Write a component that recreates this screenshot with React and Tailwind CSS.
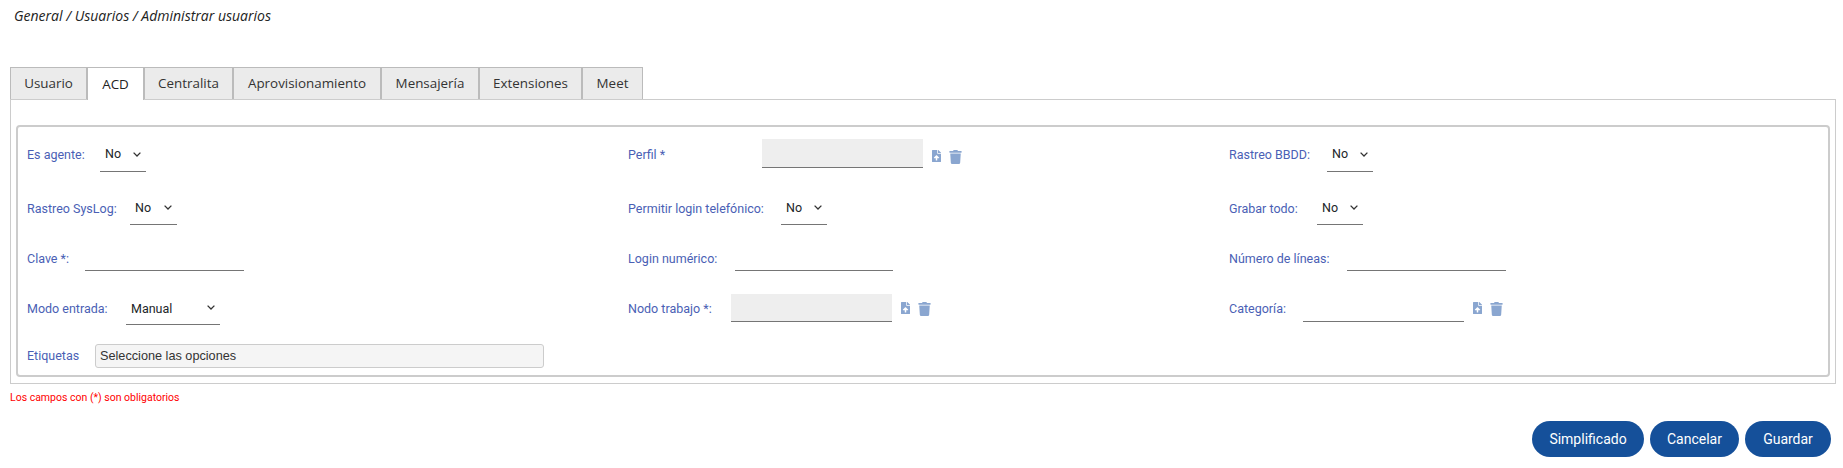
import React from "react";
import { FaFileUpload, FaTrash } from "react-icons/fa";

const tabs = ["Usuario", "ACD", "Centralita", "Aprovisionamiento", "Mensajería", "Extensiones", "Meet"];
const tabW = { Usuario: "w-[77px]", ACD: "w-[57px]", Centralita: "w-[89px]", Aprovisionamiento: "w-[148px]", "Mensajería": "w-[98px]", Extensiones: "w-[103px]", Meet: "w-[61px]" };

function Label({ children, w, nudge = "" }) {
  return <label className={`${w} shrink-0 text-[12.5px] leading-[18px] text-[#4a5fb5] whitespace-nowrap ${nudge}`}>{children}</label>;
}

function Sel({ w, v = "No", nudge = "" }) {
  return (
    <span className={`relative flex ${w} shrink-0`}>
      <select defaultValue={v} className={`w-full h-[33px] pl-[5px] ${nudge} appearance-none text-[12.5px] text-[#212529] bg-white border-0 border-b border-[#757575] outline-none`}>
        <option>{v}</option>
      </select>
      <svg viewBox="0 0 8 5" className="absolute right-[5px] top-[13px] w-[8px] h-[5px] pointer-events-none" fill="none" stroke="#333333" strokeWidth="1.3">
        <path d="M0.6 0.6 L4 4 L7.4 0.6" />
      </svg>
    </span>
  );
}

function Txt({ w, h, gray }) {
  return <input className={`${w} ${h} shrink-0 border-0 border-b border-[#757575] outline-none ${gray ? "bg-[#eeeeee]" : "bg-white"}`} />;
}

function Icons() {
  return (
    <span className="flex items-center ml-[9px] text-[#8aa6d0] pt-[2px]">
      <FaFileUpload className="w-[9px] h-[12px] mb-[2px]" />
      <FaTrash className="w-[13px] h-[14px] ml-[8px]" />
    </span>
  );
}

function Row({ h, mb, children }) {
  return <div className={`grid grid-cols-[601px_601px_1fr] grid-rows-[100%] items-center ${h} ${mb}`}>{children}</div>;
}

function Cell({ children }) {
  return <div className="flex items-center">{children}</div>;
}

export default function App() {
  return (
    <div className="w-[1843px] h-[468px] bg-white overflow-hidden font-['Roboto',sans-serif]">
      <div className="pl-[14px] pt-[7px] h-[67px] text-[14px] leading-[18px] italic text-[#222] font-['Open_Sans',sans-serif]">
        General / Usuarios / Administrar usuarios
      </div>
      <div className="ml-[10px] w-[1826px]">
        <div className="flex h-[32px] relative z-10">
          {tabs.map((t) => (
            <div
              key={t}
              className={`${tabW[t]} shrink-0 flex items-center justify-center text-[13.4px] font-['Open_Sans',sans-serif] border-t border-l border-r border-[#bbbbbb] ${t === "ACD" ? "bg-white h-[33px] text-[#222]" : "bg-[#ebebeb] h-[32px] text-[#333]"}`}
            >
              {t}
            </div>
          ))}
        </div>
        <div className="h-[285px] border border-[#cccccc] px-[5px] pt-[25px]">
          <div className="h-[252px] border-2 border-[#cccccc] rounded-[4px] pl-[9px] pt-[12px]">
            <Row h="h-[33px]" mb="mb-[20px]">
              <Cell><Label w="w-[73px]" nudge="mb-[2px]">Es agente:</Label><Sel w="w-[46px]" nudge="pb-[2px]" /></Cell>
              <Cell>
                <Label w="w-[134px]" nudge="mb-[2px]">Perfil *</Label>
                <span className="mb-[4px] flex"><Txt w="w-[161px]" h="h-[29px]" gray /></span>
                <Icons />
              </Cell>
              <Cell><Label w="w-[98px]" nudge="mb-[2px]">Rastreo BBDD:</Label><Sel w="w-[46px]" nudge="pb-[2px]" /></Cell>
            </Row>
            <Row h="h-[33px]" mb="mb-[20px]">
              <Cell><Label w="w-[103px]">Rastreo SysLog:</Label><Sel w="w-[47px]" /></Cell>
              <Cell><Label w="w-[153px]">Permitir login telefónico:</Label><Sel w="w-[46px]" /></Cell>
              <Cell><Label w="w-[88px]">Grabar todo:</Label><Sel w="w-[46px]" /></Cell>
            </Row>
            <Row h="h-[26px]" mb="mb-[23px]">
              <Cell><Label w="w-[58px]" nudge="mt-[2px]">Clave *:</Label><Txt w="w-[159px]" h="h-[26px]" /></Cell>
              <Cell><Label w="w-[107px]" nudge="mt-[2px]">Login numérico:</Label><Txt w="w-[158px]" h="h-[26px]" /></Cell>
              <Cell><Label w="w-[118px]" nudge="mt-[2px]">Número de líneas:</Label><Txt w="w-[159px]" h="h-[26px]" /></Cell>
            </Row>
            <Row h="h-[28px]" mb="mb-[22px]">
              <Cell><Label w="w-[99px]" nudge="mt-[2px]">Modo entrada:</Label><Sel w="w-[94px]" v="Manual" nudge="pt-[4px]" /></Cell>
              <Cell><Label w="w-[103px]" nudge="mt-[2px]">Nodo trabajo *:</Label><Txt w="w-[161px]" h="h-[28px]" gray /><Icons /></Cell>
              <Cell><Label w="w-[74px]" nudge="mt-[2px]">Categoría:</Label><Txt w="w-[161px]" h="h-[28px]" /><Icons /></Cell>
            </Row>
            <Row h="h-[24px]" mb="">
              <Cell>
                <Label w="w-[68px]">Etiquetas</Label>
                <div className="w-[449px] h-[24px] shrink-0 flex items-center pl-[4px] pt-[1px] text-[12.7px] text-[#333] font-['Liberation_Sans',sans-serif] bg-[#f5f5f5] border border-[#cccccc] rounded-[3px]">
                  Seleccione las opciones
                </div>
              </Cell>
            </Row>
          </div>
        </div>
        <p className="mt-[7px] text-[10.5px] leading-[14px] text-[#ff0000]">Los campos con (*) son obligatorios</p>
      </div>
      <div className="flex justify-end gap-[6px] pr-[12px] mt-[16px]">
        {[["Simplificado", "w-[112px]"], ["Cancelar", "w-[89px]"], ["Guardar", "w-[86px]"]].map(([t, w]) => (
          <button key={t} className={`${w} h-[36px] rounded-[18px] bg-[#15509a] text-white text-[14px]`}>{t}</button>
        ))}
      </div>
    </div>
  );
}
